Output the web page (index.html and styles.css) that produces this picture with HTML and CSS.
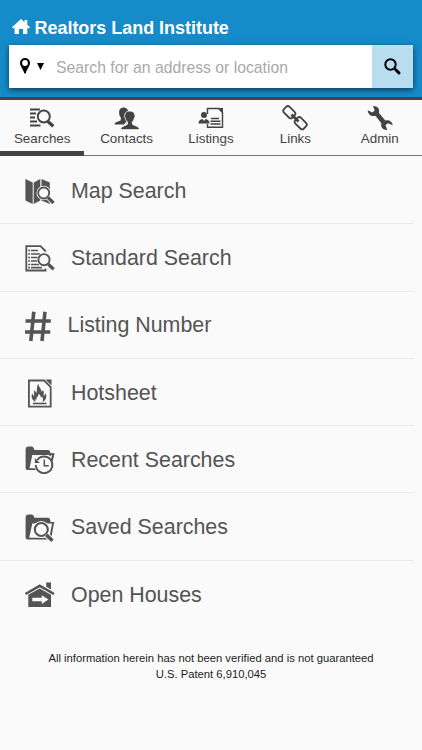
FILE: index.html
```
<!DOCTYPE html>
<html lang="en">
<head>
<meta charset="utf-8">
<title>Realtors Land Institute</title>
<link rel="stylesheet" href="styles.css">
</head>
<body>
<header class="header">
  <div class="brand">
    <svg class="brand-icon" width="18" height="16" viewBox="0 0 18 16"><path fill="#fff" d="M9 0 0 8.200l1.200 1.300L2.600 8.400V15H7V10h4v5h4.300V8.400l1.500 1.100L18 8.200 15.300 5.700V1h-2.800v2.200z"/></svg>
    <h1 class="brand-name">Realtors Land Institute</h1>
  </div>
  <div class="search">
    <svg class="pin" width="10" height="16" viewBox="0 0 10 16"><path fill="#000" fill-rule="evenodd" d="M5 0a5 5 0 0 1 5 5c0 3-3.200 6-4.200 10.200Q5 16 4.200 15.200C3.200 11 0 8 0 5a5 5 0 0 1 5-5zm0 2.100a2.900 2.900 0 1 0 0 5.800 2.900 2.900 0 0 0 0-5.800z"/></svg>
    <svg class="caret" width="7" height="7" viewBox="0 0 7 7"><path d="M0 0h7L3.500 7z"/></svg>
    <span class="placeholder">Search for an address or location</span>
    <span class="search-button"><svg width="17" height="17" viewBox="0 0 17 17" fill="none" stroke="#000"><circle cx="6.500" cy="6.500" r="5.200" stroke-width="2"/><path d="m10.300 10.300 1.700 1.700" stroke-width="2"/><path d="m12 12 3 3" stroke-width="3" stroke-linecap="round"/></svg></span>
  </div>
</header>
<nav class="tabs">
  <div class="tab active">
    <svg width="26" height="26" viewBox="0 0 26 26"><path d="M1 4.500h10M1 8.500h6M1 12.500h5M1 16.500h7M1 20.500h10.500" stroke="#434343" stroke-width="2"/><circle cx="14.800" cy="11.500" r="7.500" fill="#fafafa"/><circle cx="14.800" cy="11.500" r="6" fill="none" stroke="#434343" stroke-width="1.900"/><path d="m19 16.500 5.300 4.700" stroke="#434343" stroke-width="3.400"/></svg>
    <span>Searches</span>
  </div>
  <div class="tab">
    <svg width="26" height="26" viewBox="0 0 26 26" fill="#434343"><path d="M.5 19.500c.3-3 4.500-3 6.300-4.300V12.500C5 10.500 5 8 5.200 6.200 5.500 1.500 13 1.500 14 5.500l.5 3L13 16l-3 3.500z"/><path stroke="#fafafa" stroke-width=".9" d="M6.500 24.700c.3-3.500 4.500-3.800 6.800-5.400v-2.500c-1.500-1.300-2-3-2.100-4-1-.5-1-2.500-.3-2.800C10.500 4.700 21 4.700 20.700 10c.8.300.6 2.300-.3 2.800-.2 1.500-.8 3-2 4v2.500c2.300 1.600 6.800 1.900 7.100 5.400z"/></svg>
    <span>Contacts</span>
  </div>
  <div class="tab">
    <svg width="26" height="26" viewBox="0 0 26 26"><path d="M9.500 9V3.500h11l4 4V22.300h-15V19" fill="none" stroke="#434343" stroke-width="1.400"/><path d="M20 3h5v5.500z" fill="#434343"/><circle cx="6" cy="10" r="3" fill="#434343"/><path d="M.5 18.500c0-3 2.300-4.200 4-4.500L6 16l1.500-2c2 .3 4 1.500 4 4.500z" fill="#434343"/><path d="M13 13.500h8M12.500 16.200h10M12.500 19h10" stroke="#434343" stroke-width="1.500"/></svg>
    <span>Listings</span>
  </div>
  <div class="tab">
    <svg width="26" height="26" viewBox="0 0 26 26" fill="none" stroke="#434343" stroke-width="1.800"><rect x="-6" y="-4" width="12" height="8" rx="2.500" transform="translate(7.300 7.200) rotate(45)"/><rect x="-6" y="-4" width="12" height="8" rx="2.500" transform="translate(18.700 18.200) rotate(45)"/><path d="m9.500 9.500 7 7" stroke-width="2.800"/></svg>
    <span>Links</span>
  </div>
  <div class="tab">
    <svg width="26" height="26" viewBox="0 0 26 26"><path fill="#434343" d="M.8 5.300 5.300 7.600 7.700 5.500 6 1C10.500.7 13 4 12 8l6.300 7.500c3.700-1.200 7 1 7.500 4.700l-4.800-1.900-2.500 1.800 1.800 4.800c-4 .3-7-2.500-5.900-6.700L8.400 10.800C4.500 12 .8 9.500.8 5.300z"/></svg>
    <span>Admin</span>
  </div>
</nav>
<main>
  <div class="row">
    <svg width="30" height="34" viewBox="0 0 30 34"><path fill="#545454" d="m.4 6 7.300 3.400V31L.4 27.500zM8.700 9.400l6.600-3.400v21.500L8.700 31zM16.500 6l8.300 3.400V31l-8.300-3.500z"/><circle cx="18.700" cy="20" r="7.200" fill="#fafafa"/><circle cx="18.700" cy="20" r="5.500" fill="none" stroke="#545454" stroke-width="1.800"/><path d="m23 24.500 5.500 5.500" stroke="#fafafa" stroke-width="5"/><path d="m23 24.500 5.500 5.500" stroke="#545454" stroke-width="3.200"/></svg>
    <span>Map Search</span>
  </div>
  <div class="row">
    <svg width="30" height="34" viewBox="0 0 30 34"><path d="M20.500 28.500v2H1.300V6.200h14.200l5.300 5.300" fill="none" stroke="#545454" stroke-width="1.800"/><path d="M3.200 10.500h1.800m1 0h7M3.200 14h1.800m1 0h9M3.200 17.500h1.800m1 0h8M3.200 21h1.800m1 0h7M3.200 24.500h1.800m1 0h8M3.200 27.700h1.800m1 0h11" stroke="#545454" stroke-width="1.700"/><circle cx="19" cy="19.700" r="7" fill="#fafafa"/><circle cx="19" cy="19.700" r="5.600" fill="none" stroke="#545454" stroke-width="1.900"/><path d="m23.200 24.200 5.500 5" stroke="#545454" stroke-width="3.300"/></svg>
    <span>Standard Search</span>
  </div>
  <div class="row number">
    <svg width="26" height="34" viewBox="0 0 26 34"><path d="M8.800 3.700 5.800 33M20 3.700 17 33M.5 13h25.300M0 24h25.300" fill="none" stroke="#545454" stroke-width="3.600"/></svg>
    <span>Listing Number</span>
  </div>
  <div class="row">
    <svg width="30" height="34" viewBox="0 0 30 34"><path d="M3.900 5.500h15.300l6.500 6.500v19.700H3.900z" fill="none" stroke="#545454" stroke-width="1.800"/><path d="M20.500 4.600h6v6z" fill="#545454"/><path fill="#545454" d="M10.800 27C7 25.300 5.800 22 7.200 18.500l1.800 2.700c.8-2.200-.8-3.700.2-6.200l2 3c1.500-3-.2-6.200 2.300-9.300 0 3.300 3.200 5 3 8.300l1.500-2c1.500 2.500.4 4.200.9 6.200l1.900-3c1.400 3.800-.1 7.500-3.500 8.800 1.200-2 1-4-.3-5.600l-.9 1.600c-.3-2-1-3.500-2.500-4.600.2 3-2.600 3.400-2 6.500l-1.200-1c-.3 1.200-.3 2.200.4 3.100z"/><path d="M8 28.500h13.500" stroke="#545454" stroke-width="1.600"/></svg>
    <span>Hotsheet</span>
  </div>
  <div class="row">
    <svg width="30" height="34" viewBox="0 0 30 34"><path fill="#545454" d="M.6 26V7.500q0-3 3-3h3q2 0 2.800 3.500H23q2.300 0 2.500 3.700h3.700L26 28H2.600Q.6 28 .6 26z"/><path fill="#fafafa" d="M7.300 13h20L24 26.300H4.500z"/><circle cx="19" cy="23" r="9.600" fill="#fafafa"/><path d="M12.300 18a8.300 8.300 0 1 1-1.500 5" fill="none" stroke="#545454" stroke-width="1.900"/><path d="M19.300 17.500v6.200h4.500" fill="none" stroke="#545454" stroke-width="1.500"/><path fill="#545454" d="M9.800 16v5h5z"/><path d="m25 14 .8-2h2.700L26.500 19" fill="none" stroke="#545454" stroke-width="1.700"/></svg>
    <span>Recent Searches</span>
  </div>
  <div class="row">
    <svg width="30" height="34" viewBox="0 0 30 34"><path fill="#545454" d="M.6 27.500v-20q0-3 3-3h3q2 0 2.800 3.200H23q2.300 0 2.500 4.300h3.700L26 29.500H2.600q-2 0-2-2z"/><path fill="#fafafa" d="M7.300 13.500h19.800L24.200 27.800H4.200z"/><circle cx="16.300" cy="19.500" r="8.600" fill="#fafafa"/><circle cx="16.300" cy="19.500" r="6.500" fill="none" stroke="#545454" stroke-width="2.100"/><path d="m21.200 24.700 6.500 6" stroke="#fafafa" stroke-width="5.500"/><path d="m21.300 24.900 6.200 5.800" stroke="#545454" stroke-width="3.500"/></svg>
    <span>Saved Searches</span>
  </div>
  <div class="row">
    <svg width="30" height="34" viewBox="0 0 30 34"><path d="M.5 17 14.700 8.800 29 17" fill="none" stroke="#545454" stroke-width="2.500"/><path fill="#545454" d="M21.200 5.500h4.800v7l-4.800-2.700zM3.300 17.700 14.700 11.500 26 17.700V30H3.300z"/><path fill="#fafafa" d="M7.300 20.800h9.500V18.200L23.300 22.500 16.800 26.900v-2.600H7.300z"/></svg>
    <span>Open Houses</span>
  </div>
</main>
<footer class="legal">All information herein has not been verified and is not guaranteed<br>U.S. Patent 6,910,045</footer>
</body>
</html>
```
FILE: styles.css
```
* { box-sizing: border-box; }
body {
  margin: 0;
  width: 422px;
  height: 750px;
  overflow: hidden;
  background: #fafafa;
  font-family: "Liberation Sans", Arial, sans-serif;
}
svg { display: block; flex: none; overflow: visible; }
.header {
  height: 100px;
  padding: 18px 9px 0;
  background: #168bc9;
  border-bottom: 3px solid #41454b;
}
.brand { display: flex; align-items: center; height: 20px; padding-left: 3px; }
.brand-icon { margin-bottom: 2px; }
.brand-name { margin: 0 0 0 4.5px; font-size: 17.95px; line-height: 20px; color: #fff; }
.search {
  display: flex;
  align-items: center;
  width: 404px;
  height: 43px;
  margin-top: 7px;
  padding-left: 11px;
  background: #fff;
  box-shadow: 0 2px 6px rgba(0, 0, 0, .6);
}
.pin { margin-bottom: 2px; }
.caret { margin: 0 0 1px 7px; }
.placeholder { flex: 1; margin-left: 12px; padding-top: 2px; font-size: 15.75px; color: #a9a9a9; white-space: nowrap; }
.search-button {
  display: flex;
  align-items: center;
  justify-content: center;
  width: 41px;
  height: 43px;
  background: #b9dcef;
}
.tabs {
  display: grid;
  grid-template-columns: repeat(5, 1fr);
  height: 56px;
  border-bottom: 1px solid #777;
}
.tab {
  display: flex;
  flex-direction: column;
  align-items: center;
  height: 56px;
  padding-top: 5px;
  font-size: 13.4px;
  line-height: 16px;
  color: #434343;
}
.active { border-bottom: 5px solid #434343; }
main { padding-top: 1px; }
.row {
  display: flex;
  align-items: center;
  gap: 16px;
  width: 414px;
  height: 67.3px;
  padding-left: 25px;
  border-bottom: 1px solid #ebebeb;
  font-size: 21.4px;
  color: #545454;
}
.row span { padding-top: 2px; }
.number { gap: 16.5px; }
.row:last-child { border-bottom: 0; }
.legal { margin-top: 21.700px; text-align: center; font-size: 11.25px; line-height: 16px; color: #1c1c1c; }
```
